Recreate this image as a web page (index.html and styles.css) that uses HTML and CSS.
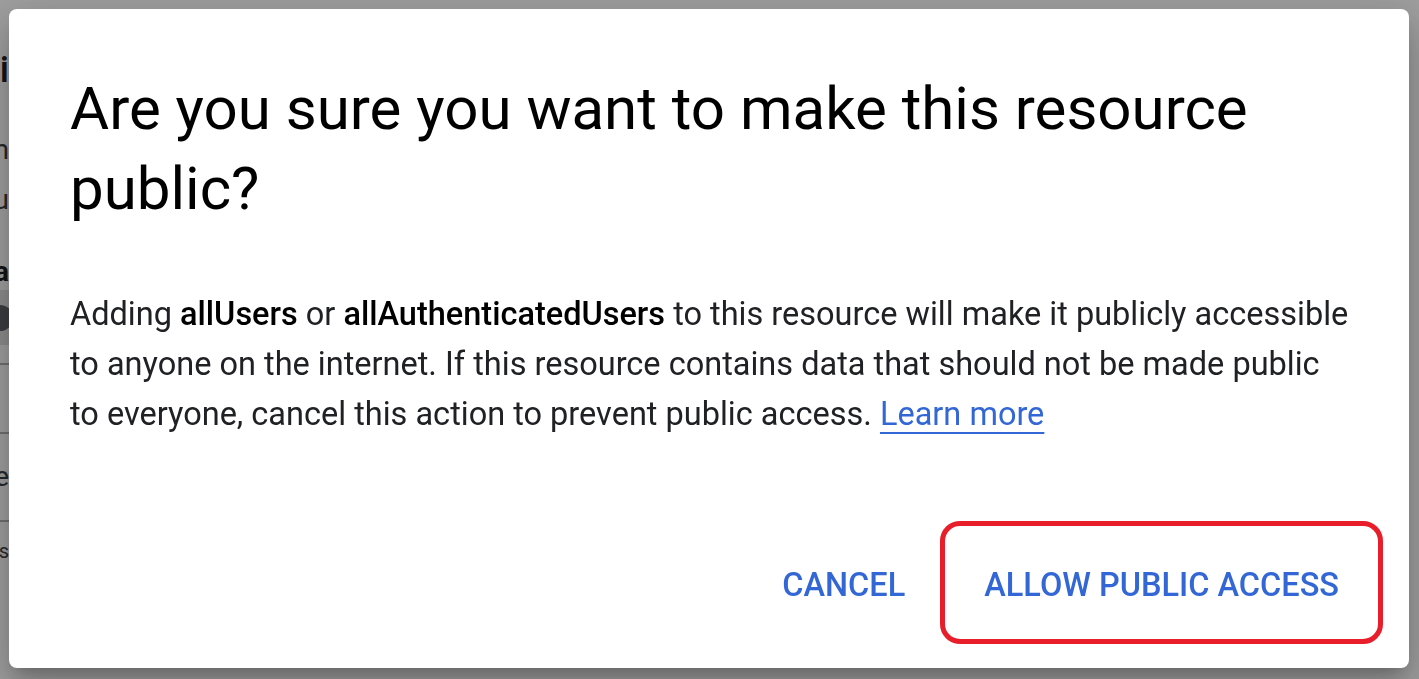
FILE: index.html
```html
<!DOCTYPE html>
<html lang="en">
<head>
<meta charset="utf-8">
<title>Make resource public</title>
<link rel="stylesheet" href="styles.css">
</head>
<body>
<div class="page">
  <div class="page-col">
    <div class="pg-heading">Edit access to publi</div>
    <div class="pg-text pg-m">Grant principals access to this item. Learn m</div>
    <div class="pg-text pg-u">permission to the resource for principals and ru</div>
    <div class="pg-bold">Principal a</div>
    <div class="pg-chip"><span class="pg-chip-x"></span></div>
    <div class="pg-row pg-r1"></div>
    <div class="pg-row pg-r2"><span class="pg-text">Storage</span></div>
    <div class="pg-row pg-r3"><span class="pg-small">Roles</span></div>
  </div>
</div>
<div class="scrim">
  <div class="dialog" role="dialog" aria-labelledby="dlg-title">
    <h1 class="dialog-title" id="dlg-title">Are you sure you want to make this resource public?</h1>
    <p class="dialog-body">Adding <b>allUsers</b> or <b>allAuthenticatedUsers</b> to this resource will make it publicly accessible to anyone on the internet. If this resource contains data that should not be made public to everyone, cancel this action to prevent public access. <a class="link" href="#">Learn more</a></p>
    <div class="dialog-actions">
      <button class="btn btn-cancel" type="button">CANCEL</button>
      <button class="btn btn-marked" type="button">ALLOW PUBLIC ACCESS</button>
    </div>
  </div>
</div>
</body>
</html>
```

FILE: styles.css
```css
html, body {
  margin: 0;
  padding: 0;
  height: 100%;
  overflow: hidden;
}
body {
  background: #ffffff;
  font-family: Roboto, "Noto Sans", Arial, sans-serif;
}
.page {
  height: 100%;
}
.page-col {
  width: 9px;
  overflow: hidden;
  display: flex;
  flex-direction: column;
  align-items: flex-end;
  white-space: nowrap;
  color: #202124;
}
.pg-heading {
  margin-top: 50px;
  font-size: 36px;
  line-height: 40px;
  font-weight: 500;
}
.pg-text {
  font-size: 28px;
  line-height: 30px;
  color: #3c4043;
}
.pg-m { margin-top: 45px; }
.pg-u { margin-top: 20px; }
.pg-bold {
  margin-top: 42px;
  font-size: 28px;
  font-weight: 700;
  line-height: 30px;
}
.pg-chip {
  align-self: stretch;
  margin-top: 3px;
  height: 55px;
  background: #e2e2e2;
  display: flex;
  align-items: center;
}
.pg-chip-x {
  display: block;
  flex: none;
  width: 26px;
  height: 26px;
  border-radius: 50%;
  background: #5f6368;
  margin-left: -13px;
}
.pg-row {
  align-self: stretch;
  border-top: 2px solid #b4b4b4;
  box-sizing: border-box;
}
.pg-r1 { margin-top: 18px; height: 69px; }
.pg-r2 { height: 88px; display: flex; align-items: center; justify-content: flex-end; }
.pg-r3 { height: 60px; display: flex; align-items: center; justify-content: flex-end; }
.pg-small { font-size: 20px; color: #3c4043; }

.scrim {
  position: fixed;
  inset: 0;
  background: rgba(0, 0, 0, 0.38);
  padding: 9px 10px 11px 9px;
  box-sizing: border-box;
  display: flex;
}
.dialog {
  flex: 1;
  background: #ffffff;
  border-radius: 8px;
  box-shadow: 0 11px 15px -7px rgba(0,0,0,.2), 0 24px 38px 3px rgba(0,0,0,.14), 0 9px 46px 8px rgba(0,0,0,.12);
  padding: 60px 26px 24px 61px;
  box-sizing: border-box;
  display: flex;
  flex-direction: column;
}
.dialog-title {
  margin: 0;
  font-size: 60px;
  line-height: 80px;
  font-weight: 400;
  color: #000000;
  padding-right: 40px;
}
.dialog-body {
  margin: 60px 0 0;
  font-size: 32.5px;
  line-height: 50px;
  color: #202124;
  padding-right: 31px;
}
.dialog-body b {
  font-weight: 500;
  color: #000;
}
.link {
  color: #3367d6;
  text-decoration: underline;
  text-underline-offset: 7px;
  text-decoration-thickness: 2px;
}
.dialog-actions {
  margin-top: auto;
  display: flex;
  justify-content: flex-end;
  align-items: stretch;
}
.btn {
  font-family: Roboto, "Noto Sans", Arial, sans-serif;
  font-size: 32.5px;
  font-weight: 500;
  color: #3367d6;
  background: transparent;
  border: none;
  padding: 4px 36px 0;
  height: 123px;
  cursor: pointer;
}
.btn-cancel {
  padding-right: 35px;
}
.btn-marked {
  border: 5px solid #e81e2a;
  border-radius: 20px;
  padding: 4px 39px 0;
}
```
